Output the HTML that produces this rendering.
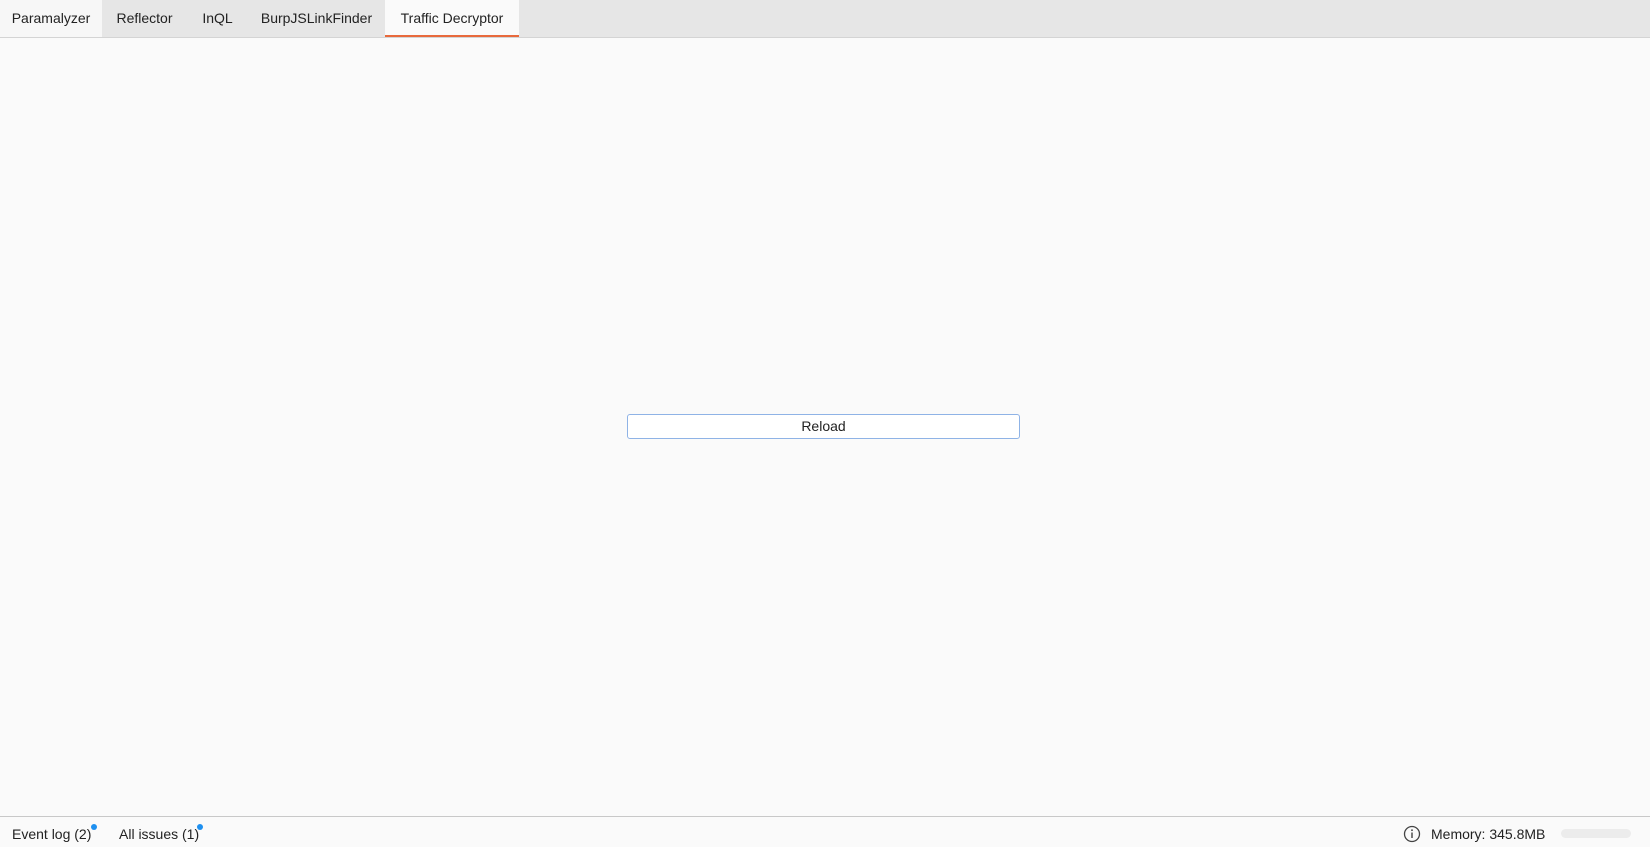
<!DOCTYPE html>
<html><head><style>
body{margin:0;width:1650px;height:846px;background:#fafafa;font-family:"Liberation Sans",sans-serif;font-size:14px;color:#222;position:relative;overflow:hidden}
.bar{position:absolute;left:0;top:0;width:1650px;height:37px;background:#e6e6e6;border-bottom:1px solid #d4d4d4}
.tab{position:absolute;top:0;height:37px;line-height:37px;text-align:center}
.btn{position:absolute;left:627px;top:414px;width:391px;height:23px;border:1px solid #8fb3e6;border-radius:3px;background:#fff;text-align:center;line-height:23px}
.foot{position:absolute;left:0;top:816px;width:1650px;height:30px;border-top:1px solid #c8c8c8;background:#fafafa}
.ft{position:absolute;top:9px}
.dot{position:absolute;width:6px;height:6px;border-radius:3px;background:#1e90f0}
</style></head><body>
<div class="bar">
<div class="tab" style="left:0;width:102px;background:#f7f7f7">Paramalyzer</div>
<div class="tab" style="left:102px;width:85px">Reflector</div>
<div class="tab" style="left:187px;width:61px">InQL</div>
<div class="tab" style="left:248px;width:137px">BurpJSLinkFinder</div>
<div class="tab" style="left:385px;width:134px;background:#fafafa;border-bottom:2px solid #e8693c;height:35px;line-height:36px">Traffic Decryptor</div>
</div>
<div class="btn">Reload</div>
<div class="foot">
<div class="ft" style="left:12px">Event log (2)</div><div class="dot" style="left:91px;top:7px"></div>
<div class="ft" style="left:119px">All issues (1)</div><div class="dot" style="left:197px;top:7px"></div>
<svg style="position:absolute;left:1403px;top:8px" width="18" height="18" viewBox="0 0 18 18"><circle cx="9" cy="9" r="7.5" fill="none" stroke="#444" stroke-width="1.3"/><rect x="8.3" y="7.5" width="1.4" height="5.5" fill="#444"/><circle cx="9" cy="5.2" r="0.9" fill="#444"/></svg>
<div class="ft" style="left:1431px">Memory: 345.8MB</div>
<div style="position:absolute;left:1561px;top:12px;width:70px;height:9px;border-radius:5px;background:#ececec"></div>
</div>
</body></html>
